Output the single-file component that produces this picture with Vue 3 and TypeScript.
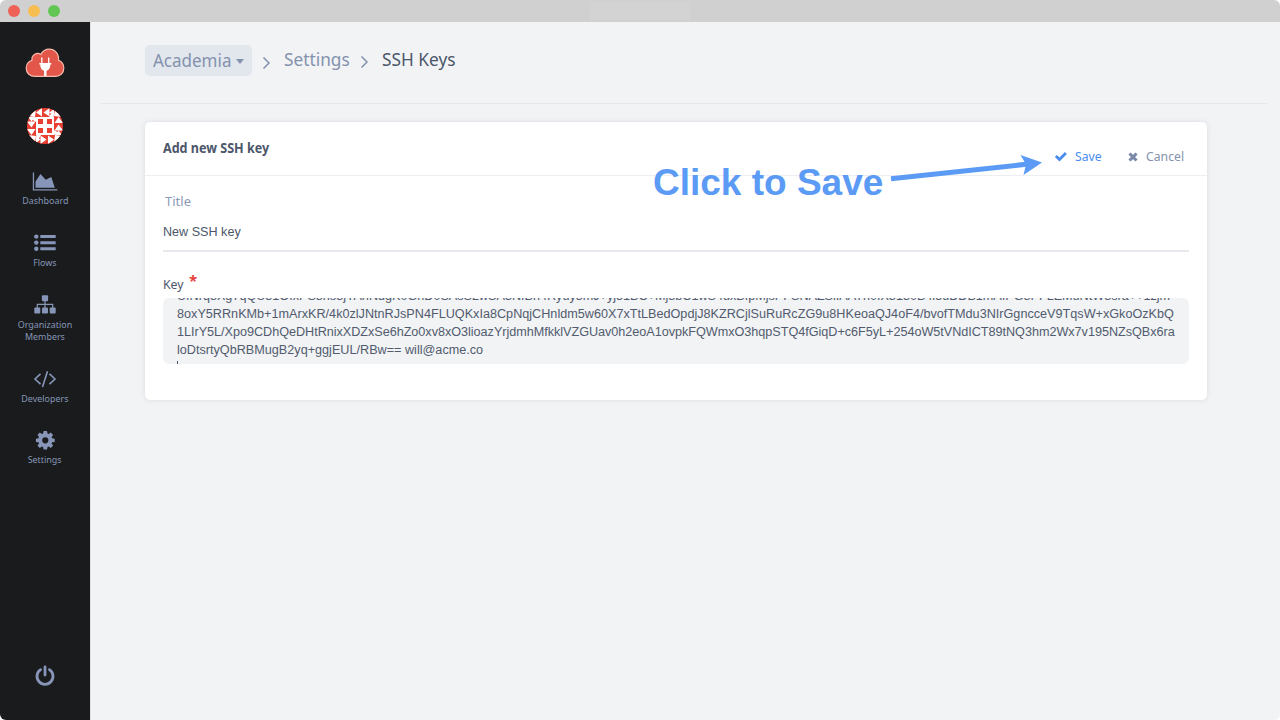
<script setup lang="ts">
interface NavItem { id: string; label: string[] }

const nav: NavItem[] = [
  { id: 'dashboard', label: ['Dashboard'] },
  { id: 'flows', label: ['Flows'] },
  { id: 'members', label: ['Organization', 'Members'] },
  { id: 'developers', label: ['Developers'] },
  { id: 'settings', label: ['Settings'] },
]

const keyLines: string[] = [
  'UfNrq8Xg7qQU31OfxPS8hs3jYAnNdgK0GhD0SAsS2wSA3NfBh4Ryuy8mJ+yj51BC+Mj8bC1wS4uxBfpMjsPFSNAZSiIAATh0fX8130B4l5uDDB1mAIPG8PFLEMuNtW8sra++1zjm',
  '8oxY5RRnKMb+1mArxKR/4k0zlJNtnRJsPN4FLUQKxIa8CpNqjCHnldm5w60X7xTtLBedOpdjJ8KZRCjlSuRuRcZG9u8HKeoaQJ4oF4/bvofTMdu3NIrGgncceV9TqsW+xGkoOzKbQ',
  '1LIrY5L/Xpo9CDhQeDHtRnixXDZxSe6hZo0xv8xO3lioazYrjdmhMfkklVZGUav0h2eoA1ovpkFQWmxO3hqpSTQ4fGiqD+c6F5yL+254oW5tVNdICT89tNQ3hm2Wx7v195NZsQBx6ra',
  'loDtsrtyQbRBMugB2yq+ggjEUL/RBw== will@acme.co',
]

const sides = [0, 90, 180, 270]
</script>

<template>
  <div class="window">
    <header class="titlebar">
      <i class="light red"></i><i class="light amber"></i><i class="light green"></i>
      <div class="address"></div>
    </header>
    <div class="body">
      <aside class="sidebar">
        <svg class="logo" viewBox="0 0 40 30" width="40" height="30">
          <path d="M10 28.400C4.600 28.400 1.200 24.800 1.200 20.300C1.200 16 4 13.200 7 12.200C6.200 7.500 11.500 3.800 15.800 6.400C17.800 2.800 21 1.200 24.200 1.200C30 1.200 34.200 6 33.500 12.400C36.800 13.600 38.800 16.600 38.800 20.200C38.800 25 35.200 28.400 30.600 28.400Z" fill="#e2574a" stroke="#f9b9ac" stroke-width="1.200" />
          <path d="M16.800 9.500v6M23.700 9.500v6" stroke="#fff" stroke-width="1.300" />
          <path d="M14.300 15h12v1.500h-1c0 4-1.600 5.600-3.800 6.200V28h-2.400v-5.300c-2.200-.6-3.800-2.200-3.800-6.200h-1Z" fill="#fff" />
        </svg>
        <svg class="avatar" viewBox="-18 -18 36 36" width="36" height="36">
          <defs><clipPath id="disc"><circle r="18" /></clipPath></defs>
          <g clip-path="url(#disc)">
            <rect x="-18" y="-18" width="36" height="36" fill="#e93f33" />
            <g v-for="a in sides" :key="a" :transform="`rotate(${a})`" fill="#fff">
              <path d="M-9-13.500L-3-18V-9.500ZM-1.500-13.500L4.500-18V-9.500ZM4.500-13.500L9-17V-10ZM-17-10L-9-17L-10-9ZM-14-7L-9-9V-4Z" />
            </g>
            <rect x="-9" y="-9" width="18" height="18" fill="#fff" />
            <path d="M-7-7h5v5h-5ZM2-7h5v5h-5ZM-7 2h5v5h-5ZM2 2h5v5h-5Z" fill="#e93f33" />
          </g>
        </svg>
        <nav>
          <a v-for="item in nav" :key="item.id" class="nav-item" :class="item.id">
            <svg v-if="item.id === 'dashboard'" width="26" height="20" viewBox="0 -1 26 20">
              <path d="M.800.500h1.300v16.700H25.300v1.300H.800ZM3.500 15.800V9.500L8.500 2l5.200 5.700L19.300 5l3.500 10.800Z" />
            </svg>
            <svg v-else-if="item.id === 'flows'" width="26" height="20" viewBox="0 1 26 20">
              <circle cx="4.300" cy="4.600" r="2.200" /><circle cx="4.300" cy="10.600" r="2.200" /><circle cx="4.300" cy="16.800" r="2.200" />
              <path d="M8.300 3.100h15.400v3H8.300zM8.300 9.200h15.400v3H8.300zM8.300 15.300h15.400v3H8.300z" />
            </svg>
            <svg v-else-if="item.id === 'members'" width="26" height="20" viewBox="0 1 26 20">
              <path d="M5.300 14V10.400H20.700V14M13 5V14" fill="none" stroke="#8796b8" stroke-width="1.200" />
              <rect x="9.900" y="1.200" width="6.200" height="6" rx="1" /><rect x="2.300" y="13.500" width="6" height="6" rx="1" />
              <rect x="10" y="13.500" width="6" height="6" rx="1" /><rect x="17.700" y="13.500" width="6" height="6" rx="1" />
            </svg>
            <svg v-else-if="item.id === 'developers'" width="26" height="20" viewBox="0 0 26 20">
              <path d="M8.500 4.800L3 10l5.500 5.200M17.500 4.800L23 10l-5.500 5.200M15.500 2.200l-5 15.700" fill="none" stroke="#8796b8" stroke-width="1.600" />
            </svg>
            <svg v-else width="26" height="20" viewBox="-13.300 -9.300 26 20">
              <path fill-rule="evenodd" d="M-1.700-9.300H1.700L2.200-6.700L3.400-6.200L5.500-7.700L7.800-5.400L6.300-3.200L6.800-2L9.400-1.600V1.600L6.800 2L6.300 3.200L7.800 5.400L5.500 7.700L3.400 6.200L2.200 6.700L1.700 9.300H-1.700L-2.200 6.700L-3.400 6.200L-5.500 7.700L-7.800 5.400L-6.300 3.200L-6.800 2L-9.400 1.600V-1.600L-6.800-2L-6.300-3.200L-7.800-5.400L-5.500-7.700L-3.400-6.200L-2.200-6.700ZM0-3.100A3.100 3.100 0 1 0 0 3.100A3.100 3.100 0 1 0 0-3.100Z" />
            </svg>
            <span class="nav-label"><span v-for="word in item.label" :key="word">{{ word }}</span></span>
          </a>
        </nav>
        <svg class="power" width="20" height="21" viewBox="0 0 20 21">
          <path d="M5.600 4.600A8 8 0 1 0 14.400 4.600M10 1.800V10" fill="none" stroke="#8796b8" stroke-width="2.800" stroke-linecap="round" />
        </svg>
      </aside>
      <main>
        <div class="crumbs">
          <span class="org"><span class="org-name">Academia</span><i class="caret"></i></span>
          <svg class="chev one" width="9" height="14" viewBox="0 0 9 14"><path d="M1.500 1.500L7 7l-5.500 5.500" /></svg>
          <span class="crumb parent"><span>Settings</span></span>
          <svg class="chev two" width="9" height="14" viewBox="0 0 9 14"><path d="M1.500 1.500L7 7l-5.500 5.500" /></svg>
          <span class="crumb current"><span>SSH Keys</span></span>
        </div>
        <section class="card">
          <div class="card-head">
            <h2>Add new SSH key</h2>
            <div class="actions">
              <a class="save">
                <svg width="14" height="12" viewBox="0 0 14 12"><path d="M.900 6.100L2.900 4.100l2.600 2.400L10.900 1l2 2.100L5.500 10.500Z" fill="#4a8cf0" /></svg>
                <span>Save</span>
              </a>
              <a class="cancel">
                <svg width="12" height="12" viewBox="0 0 12 12"><path d="M2.500 2.500l7 7M9.500 2.500l-7 7" stroke="#7a89a8" stroke-width="3.100" /></svg>
                <span>Cancel</span>
              </a>
            </div>
          </div>
          <label class="title-label">Title</label>
          <div class="title-input">New SSH key</div>
          <label class="key-label"><span>Key</span><i class="required">*</i></label>
          <div class="key-box">
            <div v-for="(line, i) in keyLines" :key="i" class="key-line">{{ line }}</div>
            <i class="cursor"></i>
          </div>
        </section>
      </main>
    </div>
    <div class="callout">Click to Save</div>
    <svg class="arrow" width="160" height="40" viewBox="0 0 160 40">
      <path d="M1 28.800L136 14.300" stroke="#5b9bf5" stroke-width="5" />
      <path d="M152 12.500L130.500 5L136 14.500L133.500 25Z" fill="#5b9bf5" />
    </svg>
  </div>
</template>

<style>
html, body { overflow: hidden; background: #fff; }
</style>

<style scoped>
.window { width: 1280px; height: 720px; position: relative; overflow: hidden; background: #f1f3f5; border-radius: 6px; font-family: "Noto Sans", "Open Sans", sans-serif; color: #4c566a; }
.titlebar { height: 22px; background: #d0d0d0; display: flex; align-items: center; gap: 8px; padding-left: 8px; box-sizing: border-box; }
.light { width: 12px; height: 12px; border-radius: 50%; }
.red { background: #ee6156; }
.amber { background: #f6be50; }
.green { background: #62c655; }
.address { width: 100px; height: 18px; margin-left: 522px; background: #d3d3d3; }
.body { display: flex; height: 698px; }
.sidebar { width: 90px; background: #191b1c; display: flex; flex-direction: column; align-items: center; flex: none; }
.logo { margin-top: 26px; flex: none; }
.avatar { margin-top: 30px; flex: none; }
nav { margin-top: 27px; width: 90px; }
.nav-item { display: flex; flex-direction: column; align-items: center; height: 62px; color: #8796b8; fill: #8796b8; font-size: 9.800px; line-height: 12px; text-align: center; }
.nav-item svg { flex: none; }
.nav-label { display: flex; flex-direction: column; margin-top: 4px; transform: scaleX(.910); }
.members { height: 74px; }
.settings .nav-label { margin-top: 3px; }
.power { margin-top: auto; margin-bottom: 34px; }
main { flex: 1; padding: 0 73px 0 55px; border-left: 1px solid #dcdee2; box-sizing: border-box; }
.crumbs { height: 81px; margin: 0 -61px 0 -45px; padding-left: 44px; border-bottom: 1px solid #e5e7ea; display: flex; align-items: flex-start; font-size: 18.700px; line-height: 24px; color: #8492ae; }
.org { margin-top: 23px; width: 107px; height: 31px; box-sizing: border-box; padding: 3px 8px 5px; border-radius: 5px; background: #e2e6ed; display: flex; align-items: center; }
.org-name { width: 79px; transform: scaleX(.910); transform-origin: 0 50%; }
.caret { border: 4px solid transparent; border-top: 5px solid #8492ae; border-bottom: 0; margin: 3px 0 0 auto; }
.chev { fill: none; stroke: #8492ae; stroke-width: 1.500; flex: none; }
.chev.one { margin: 34px 13px 0 10px; }
.chev.two { margin: 33px 13px 0 10px; }
.crumb { margin-top: 25px; }
.crumb span { display: block; transform: scaleX(.925); transform-origin: 0 50%; white-space: nowrap; }
.parent { width: 66px; }
.current { color: #4c566a; }
.card { margin: 18px 0 0 -1px; width: 1062px; height: 278px; background: #fff; border-radius: 5px; box-shadow: 0 0 5px rgba(60,70,90,.13); box-sizing: border-box; }
.card-head { height: 54px; box-sizing: border-box; border-bottom: 1px solid #eceef1; display: flex; justify-content: space-between; padding: 0 23px 0 18px; }
h2 { margin: 16px 0 0; font-size: 13.500px; line-height: 20px; font-weight: 700; transform: scaleX(.930); transform-origin: 0 50%; }
.actions { display: flex; font-size: 13px; line-height: 20px; padding-top: 24px; }
.actions a { display: flex; align-items: center; height: 20px; }
.actions svg { flex: none; margin-top: 1px; }
.actions span { margin-left: 7px; transform: scaleX(.940); transform-origin: 0 50%; }
.save { color: #4a8cf0; width: 73px; }
.cancel { color: #8492ae; width: 57px; }
.title-label { display: block; margin: 16px 0 0 20px; font-size: 13px; line-height: 18px; color: #8c9ab5; }
.title-input { margin: 11px 18px 0; height: 29px; font: 12.600px/22px "Liberation Sans", Arial, sans-serif; border-bottom: 2px solid #e7e9ee; }
.key-label { display: flex; margin: 21px 18px 0; height: 25px; font-size: 13.200px; line-height: 22px; }
.key-label span { width: 21px; transform: scaleX(.930); transform-origin: 0 50%; }
.required { color: #e8413a; font-size: 15px; font-style: normal; font-weight: 700; margin-left: 5px; line-height: 14px; }
.key-box { margin: 0 18px; height: 66px; overflow: hidden; background: #f1f3f5; border-radius: 6px; padding-left: 14px; font: 12.650px/18px "Liberation Sans", Arial, sans-serif; color: #525b6e; white-space: nowrap; }
.key-line:first-child { margin-top: -11px; letter-spacing: -.015px; }
.key-line:nth-child(3) { letter-spacing: -.030px; }
.cursor { display: block; width: 1px; height: 8px; margin: 2px 0 0; background: #4c566a; }
.callout { position: absolute; left: 653px; top: 162px; font: 700 37px/42px "Liberation Sans", Arial, sans-serif; color: #5b9bf5; white-space: nowrap; }
.arrow { position: absolute; left: 890px; top: 150px; }
</style>
